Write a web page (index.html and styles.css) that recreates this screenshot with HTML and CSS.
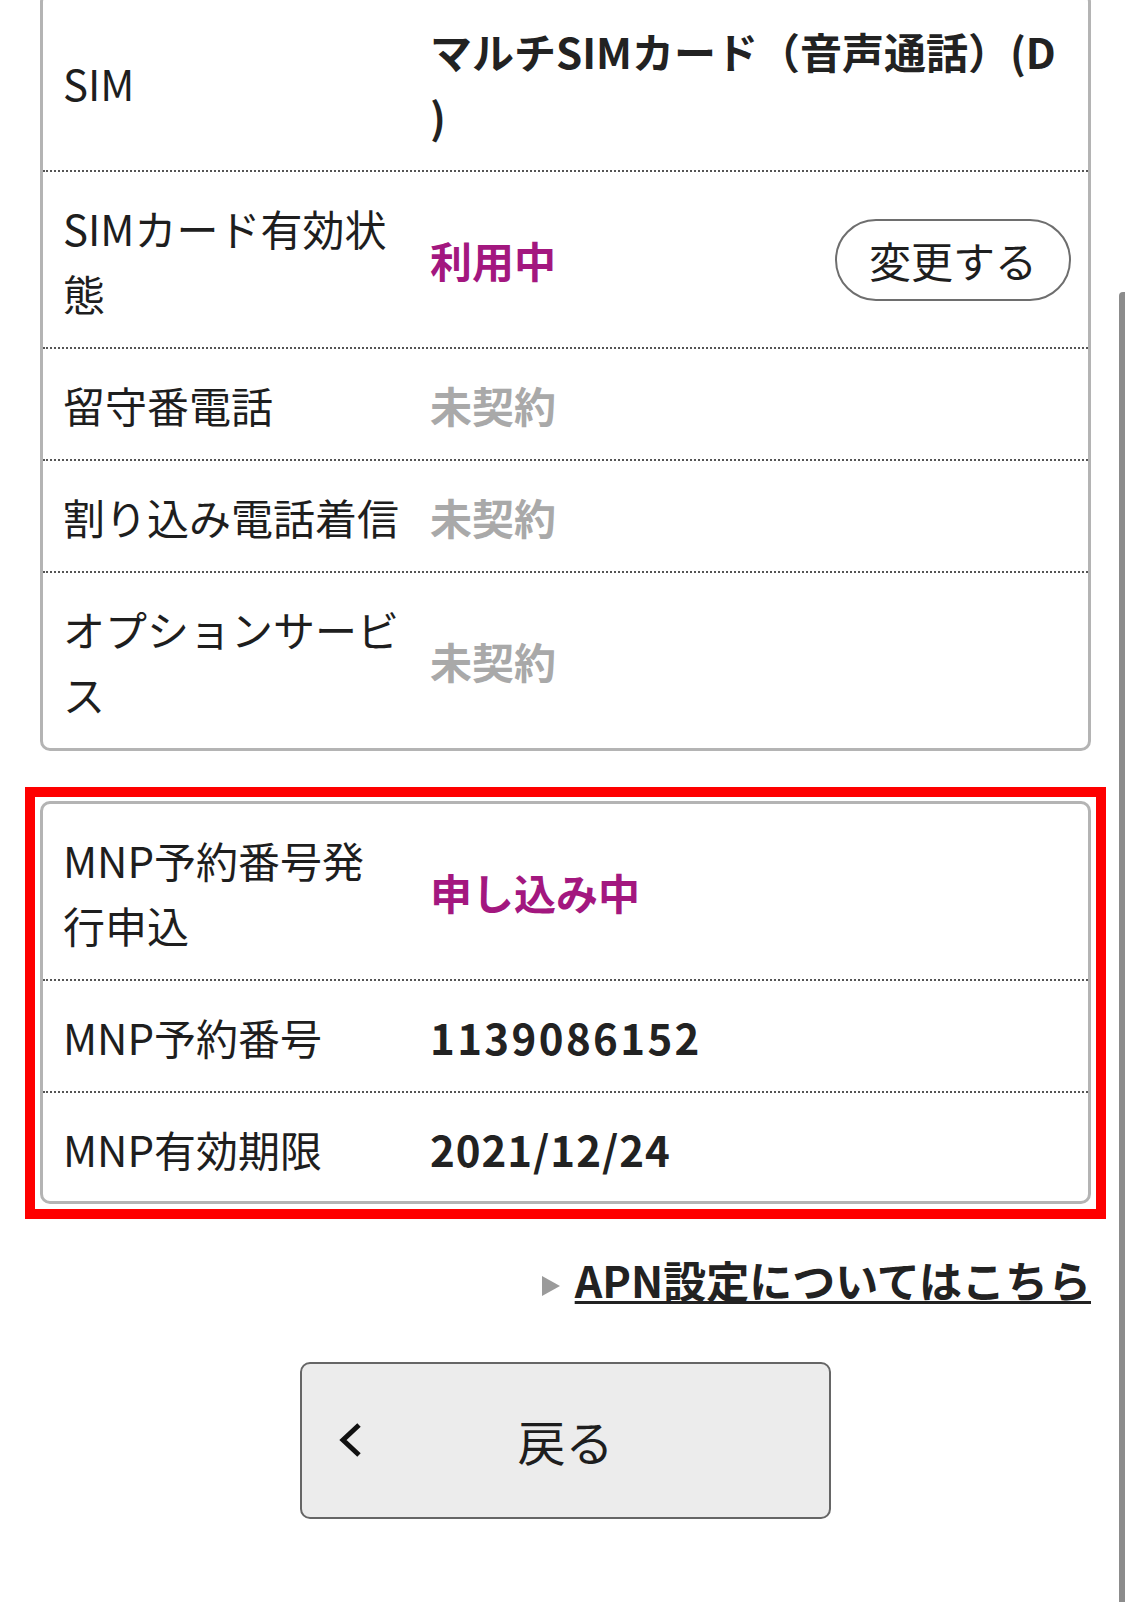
FILE: index.html
```html
<!DOCTYPE html>
<html lang="ja">
<head>
<meta charset="utf-8">
<title>SIM情報</title>
<link rel="stylesheet" href="styles.css">
</head>
<body>
<div class="scroll-indicator"></div>
<main class="page">
  <section class="card">
    <div class="row">
      <div class="label">SIM</div>
      <div class="value">マルチSIMカード（音声通話）(D<br>)</div>
    </div>
    <div class="row">
      <div class="label">SIMカード有効状態</div>
      <div class="value value--split">
        <span class="status status--active">利用中</span>
        <button type="button" class="pill">変更する</button>
      </div>
    </div>
    <div class="row">
      <div class="label">留守番電話</div>
      <div class="value status--none">未契約</div>
    </div>
    <div class="row">
      <div class="label">割り込み電話着信</div>
      <div class="value status--none">未契約</div>
    </div>
    <div class="row">
      <div class="label">オプションサービス</div>
      <div class="value status--none">未契約</div>
    </div>
  </section>

  <div class="highlight">
    <section class="card card--inner">
      <div class="row">
        <div class="label">MNP予約番号発行申込</div>
        <div class="value status--active">申し込み中</div>
      </div>
      <div class="row">
        <div class="label">MNP予約番号</div>
        <div class="value value--number">1139086152</div>
      </div>
      <div class="row">
        <div class="label">MNP有効期限</div>
        <div class="value value--date">2021/12/24</div>
      </div>
    </section>
  </div>

  <p class="apn">
    <svg class="apn__arrow" width="18" height="20" viewBox="0 0 18 20" aria-hidden="true"><polygon points="0,0 18,10 0,20" fill="#9b9b9b"/></svg><a href="#" class="apn__link">APN設定についてはこちら</a>
  </p>

  <button type="button" class="back">
    <svg class="back__icon" width="24" height="36" viewBox="0 0 24 36" aria-hidden="true"><polyline points="20,3 4,18 20,33" fill="none" stroke="#111" stroke-width="5"/></svg>
    <span class="back__text">戻る</span>
    <span></span>
  </button>
</main>
</body>
</html>
```

FILE: styles.css
```css
html, body {
  margin: 0;
  padding: 0;
  background: #fff;
}

body {
  font-family: "Noto Sans CJK JP", "Noto Sans", sans-serif;
  color: #1e1e1e;
  overflow: hidden;
}

.scroll-indicator {
  position: fixed;
  top: 292px;
  right: 0;
  bottom: 0;
  width: 6px;
  background: #8c8c8c;
  border-top-left-radius: 4px;
}

.page {
  padding: 0 34px 0 40px;
}

.card {
  margin-top: -8px;
  border: 3px solid #b4b4b4;
  border-radius: 10px;
  background: #fff;
}

.highlight {
  margin: 36px -15px 0;
  border: 10px solid #fe0000;
  padding: 4px 5px 5px;
}

.card--inner {
  margin-top: 0;
}

.row {
  display: grid;
  grid-template-columns: 338px 1fr;
  column-gap: 29px;
  align-items: center;
  padding: 22.5px 17px 22.5px 20px;
  border-bottom: 2px dotted #555;
  font-size: 42px;
  line-height: 65px;
}

.row:last-child {
  border-bottom: none;
}

.card--inner .row:last-child {
  padding-bottom: 20px;
}

.label {
  font-weight: 400;
}

.value {
  font-weight: 700;
  color: #222;
}

.value--number {
  letter-spacing: 2.4px;
}

.value--date {
  letter-spacing: 1px;
}

.value--split {
  display: flex;
  align-items: center;
  justify-content: space-between;
}

.status--active {
  color: #a3177f;
}

.status--none {
  color: #a9a9a9;
}

.pill {
  width: 236px;
  height: 82px;
  padding: 0;
  border: 2px solid #6e6e6e;
  border-radius: 41px;
  background: #fff;
  font-family: inherit;
  font-size: 42px;
  font-weight: 400;
  line-height: 1;
  color: #1e1e1e;
}

.apn {
  margin: 28px 0 0;
  text-align: right;
  font-size: 43px;
  font-weight: 700;
  line-height: 65px;
}

.apn__arrow {
  vertical-align: 2px;
  margin-right: 15px;
}

.apn__link {
  color: #222;
  text-decoration: underline;
  text-decoration-thickness: 3px;
  text-underline-offset: 3px;
}

.back {
  display: grid;
  grid-template-columns: 1fr auto 1fr;
  align-items: center;
  box-sizing: border-box;
  width: 531px;
  height: 157px;
  margin: 50px auto 0;
  padding: 0 37px;
  border: 2px solid #666;
  border-radius: 10px;
  background: #ececec;
  font-family: inherit;
  font-size: 48px;
  font-weight: 400;
  color: #1e1e1e;
}

.back__icon {
  justify-self: start;
}
```
